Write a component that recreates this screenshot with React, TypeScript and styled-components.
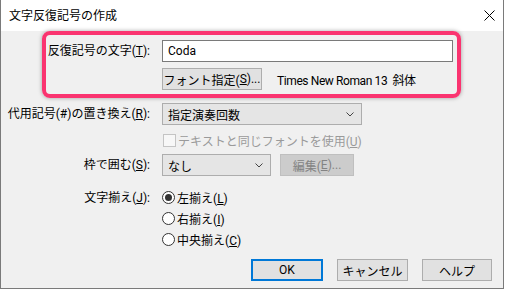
import React from "react";
import styled, { createGlobalStyle } from "styled-components";

const GlobalStyle = createGlobalStyle`
  html, body {
    margin: 0;
    padding: 0;
    background: #ffffff;
  }
  body {
    font-family: Roboto, "Noto Sans CJK JP", sans-serif;
    font-size: 12px;
    color: #000;
  }
`;

const Window = styled.div`
  width: 504px;
  height: 289px;
  box-sizing: border-box;
  border: 1px solid #7a7a7a;
  border-top: none;
  background: #f0f0f0;
  display: flex;
  flex-direction: column;
`;

const TitleBar = styled.div`
  height: 31px;
  background: #ffffff;
  display: flex;
  align-items: center;
  justify-content: space-between;
  padding: 0 8px 0 8px;
`;

const Title = styled.div`
  font-size: 12px;
  line-height: 1;
`;

const CloseIcon = () => (
  <svg width="11" height="11" viewBox="0 0 11 11">
    <path d="M0.5 0.5 L10.5 10.5 M10.5 0.5 L0.5 10.5" stroke="#000" strokeWidth="1" />
  </svg>
);

const Body = styled.div`
  display: flex;
  flex-direction: column;
  flex: 1;
`;

const Highlight = styled.div`
  margin-left: 41px;
  width: 419px;
  box-sizing: border-box;
  border: 4px solid #fa3470;
  border-radius: 8px;
  padding: 5px 0 4px 0;
  display: flex;
  flex-direction: column;
  gap: 6px;
  box-shadow: 0 0 4px rgba(0, 0, 0, 0.35);
`;

const Row = styled.div<{ $labelWidth?: number; $top?: number }>`
  display: grid;
  grid-template-columns: ${(p) => p.$labelWidth ?? 149}px 1fr;
  column-gap: 12px;
  align-items: center;
  margin-top: ${(p) => p.$top ?? 0}px;
`;

const Label = styled.div`
  text-align: right;
  white-space: nowrap;
  line-height: 1;
`;

const Controls = styled.div`
  display: flex;
  align-items: center;
`;

const TextInput = styled.div`
  width: 291px;
  height: 22px;
  box-sizing: border-box;
  border: 1px solid #7a7a7a;
  background: #ffffff;
  padding-left: 5px;
  display: flex;
  align-items: center;
`;

const Button = styled.div<{ $width: number; $default?: boolean; $disabled?: boolean }>`
  width: ${(p) => p.$width}px;
  height: 22px;
  box-sizing: border-box;
  border: ${(p) =>
    p.$default ? "2px solid #0078d7" : p.$disabled ? "1px solid #bfbfbf" : "1px solid #adadad"};
  background: ${(p) => (p.$disabled ? "#cccccc" : "#e1e1e1")};
  color: ${(p) => (p.$disabled ? "#838383" : "#000")};
  display: flex;
  align-items: center;
  justify-content: center;
  white-space: nowrap;
  margin-left: ${(p) => (p.$disabled ? 9 : 0)}px;
`;

const FontInfo = styled.span`
  margin-left: 15px;
  white-space: nowrap;
  letter-spacing: -0.4px;
`;

const Select = styled.div<{ $width: number }>`
  width: ${(p) => p.$width}px;
  height: 22px;
  box-sizing: border-box;
  border: 1px solid #adadad;
  background: #e5e5e5;
  display: flex;
  align-items: center;
  justify-content: space-between;
  padding: 0 7px 0 5px;
`;

const Chevron = () => (
  <svg width="8" height="5" viewBox="0 0 8 5">
    <path d="M0.5 0.5 L4 4 L7.5 0.5" stroke="#444" strokeWidth="1" fill="none" />
  </svg>
);

const CheckRow = styled.div`
  display: flex;
  align-items: center;
  gap: 2px;
  margin-left: 1px;
  color: #9a9a9a;
  height: 13px;
`;

const CheckBox = styled.span`
  width: 13px;
  height: 13px;
  box-sizing: border-box;
  border: 1px solid #c4c4c4;
  background: #f7f7f7;
`;

const RadioGroup = styled.div`
  display: grid;
  grid-template-columns: 149px 1fr;
  column-gap: 12px;
  margin-top: 11px;
`;

const RadioList = styled.div`
  display: flex;
  flex-direction: column;
`;

const RadioRow = styled.div`
  height: 21px;
  display: flex;
  align-items: center;
  gap: 2px;
`;

const GroupLabel = styled(Label)`
  height: 21px;
  display: flex;
  align-items: center;
  justify-content: flex-end;
`;

const RadioCircle = styled.span<{ $checked?: boolean }>`
  width: 13px;
  height: 13px;
  box-sizing: border-box;
  border: 1px solid #333;
  border-radius: 50%;
  background: #fff;
  display: flex;
  align-items: center;
  justify-content: center;
  &::after {
    content: "";
    width: 7px;
    height: 7px;
    border-radius: 50%;
    background: ${(p) => (p.$checked ? "#333" : "transparent")};
  }
`;

const Footer = styled.div`
  display: flex;
  justify-content: flex-end;
  gap: 14px;
  padding-right: 11px;
  margin-top: 9px;
`;

const radios = [
  { text: "左揃え", key: "L", checked: true },
  { text: "右揃え", key: "I", checked: false },
  { text: "中央揃え", key: "C", checked: false },
];

export default function App() {
  return (
    <>
      <GlobalStyle />
      <Window>
        <TitleBar>
          <Title>文字反復記号の作成</Title>
          <CloseIcon />
        </TitleBar>
        <Body>
          <Highlight>
            <Row $labelWidth={104}>
              <Label>
                反復記号の文字(<u>T</u>):
              </Label>
              <Controls>
                <TextInput>Coda</TextInput>
              </Controls>
            </Row>
            <Row $labelWidth={104}>
              <span />
              <Controls>
                <Button $width={100}>
                  フォント指定(<u>S</u>)...
                </Button>
                <FontInfo>Times New Roman 13&nbsp; 斜体</FontInfo>
              </Controls>
            </Row>
          </Highlight>

          <Row $top={5}>
            <Label>
              代用記号(#)の置き換え(<u>R</u>):
            </Label>
            <Controls>
              <Select $width={200}>
                <span>指定演奏回数</span>
                <Chevron />
              </Select>
            </Controls>
          </Row>

          <Row $top={9}>
            <span />
            <CheckRow>
              <CheckBox />
              <span>
                テキストと同じフォントを使用(<u>U</u>)
              </span>
            </CheckRow>
          </Row>

          <Row $top={7}>
            <Label>
              枠で囲む(<u>S</u>):
            </Label>
            <Controls>
              <Select $width={109}>
                <span>なし</span>
                <Chevron />
              </Select>
              <Button $width={74} $disabled>
                編集(<u>E</u>)...
              </Button>
            </Controls>
          </Row>

          <RadioGroup>
            <GroupLabel>
              文字揃え(<u>J</u>):
            </GroupLabel>
            <RadioList>
              {radios.map((r) => (
                <RadioRow key={r.key}>
                  <RadioCircle $checked={r.checked} />
                  <span>
                    {r.text}(<u>{r.key}</u>)
                  </span>
                </RadioRow>
              ))}
            </RadioList>
          </RadioGroup>

          <Footer>
            <Button $width={72} $default>
              OK
            </Button>
            <Button $width={71}>キャンセル</Button>
            <Button $width={70}>ヘルプ</Button>
          </Footer>
        </Body>
      </Window>
    </>
  );
}
